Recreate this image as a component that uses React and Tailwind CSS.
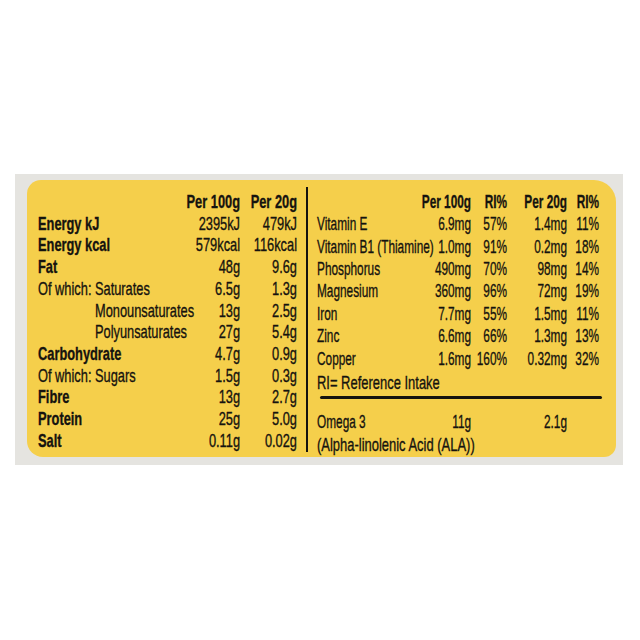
import React from 'react';

const leftRows = [
  { label: 'Energy kJ', bold: true, a: '2395kJ', b: '479kJ' },
  { label: 'Energy kcal', bold: true, a: '579kcal', b: '116kcal' },
  { label: 'Fat', bold: true, a: '48g', b: '9.6g' },
  { pre: 'Of which:', label: 'Saturates', a: '6.5g', b: '1.3g' },
  { indent: true, label: 'Monounsaturates', a: '13g', b: '2.5g' },
  { indent: true, label: 'Polyunsaturates', a: '27g', b: '5.4g' },
  { label: 'Carbohydrate', bold: true, a: '4.7g', b: '0.9g' },
  { pre: 'Of which:', label: 'Sugars', a: '1.5g', b: '0.3g' },
  { label: 'Fibre', bold: true, a: '13g', b: '2.7g' },
  { label: 'Protein', bold: true, a: '25g', b: '5.0g' },
  { label: 'Salt', bold: true, a: '0.11g', b: '0.02g' },
];

const rightRows = [
  ['Vitamin E', '6.9mg', '57%', '1.4mg', '11%'],
  ['Vitamin B1 (Thiamine)', '1.0mg', '91%', '0.2mg', '18%'],
  ['Phosphorus', '490mg', '70%', '98mg', '14%'],
  ['Magnesium', '360mg', '96%', '72mg', '19%'],
  ['Iron', '7.7mg', '55%', '1.5mg', '11%'],
  ['Zinc', '6.6mg', '66%', '1.3mg', '13%'],
  ['Copper', '1.6mg', '160%', '0.32mg', '32%'],
];

// text is set in Liberation Sans and squeezed horizontally to get the condensed look
const LeftRow = ({ row }) => (
  <div className="flex whitespace-nowrap">
    <div className={`flex-1 min-w-0 flex ${row.bold ? 'font-bold' : ''} ${row.indent ? 'pl-[84.4px]' : ''}`}>
      {row.pre && <span className="w-[84.4px] shrink-0">{row.pre}</span>}
      <span>{row.label}</span>
    </div>
    <div className="w-[90px] text-right">{row.a}</div>
    <div className="w-[84.4px] text-right">{row.b}</div>
  </div>
);

const RightRow = ({ cells, bold }) => (
  <div className={`flex whitespace-nowrap ${bold ? 'font-bold' : ''}`}>
    <div className="flex-1 min-w-0">{cells[0]}</div>
    <div className="w-[90px] text-right">{cells[1]}</div>
    <div className="w-[57.8px] text-right">{cells[2]}</div>
    <div className="w-[96.5px] text-right">{cells[3]}</div>
    <div className="w-[51.4px] text-right">{cells[4]}</div>
  </div>
);

export default function App() {
  return (
    <div className="w-[640px] h-[640px] bg-white pt-[174px] pl-[15px] font-['Liberation_Sans',Arial,sans-serif] text-[19px] text-[#15130f] [-webkit-text-stroke:0.35px_#15130f]">
      <div className="w-[608px] h-[291px] bg-[#e5e4e0] pt-[6px] pl-[12px]">
        <div className="w-[589px] h-[277px] bg-[#f5cf4b] rounded-tl-[14px] rounded-tr-[22px] rounded-br-[12px] rounded-bl-[16px] flex">

          {/* left: energy + macros */}
          <div className="w-[279px] shrink-0">
            <div className="w-[413.3px] origin-left scale-x-[0.675] pt-[11px] pl-[16.3px] pr-[13.3px] leading-[21.7px]">
              <div className="flex whitespace-nowrap font-bold">
                <div className="flex-1" />
                <div className="w-[90px] text-right">Per 100g</div>
                <div className="w-[84.4px] text-right">Per 20g</div>
              </div>
              {leftRows.map((r, i) => <LeftRow key={i} row={r} />)}
            </div>
          </div>

          <div className="w-[2px] shrink-0 mt-[7px] h-[265px] bg-[#15130f]" />

          {/* right: vitamins + minerals */}
          <div className="w-[308px] shrink-0">
            <div className="w-[495.2px] origin-left scale-x-[0.622] pt-[10.8px] pl-[14.5px] pr-[27.4px] leading-[22.4px]">
              <RightRow bold cells={['', 'Per 100g', 'RI%', 'Per 20g', 'RI%']} />
              {rightRows.map((c, i) => <RightRow key={i} cells={c} />)}
            </div>
            <div className="w-[460px] origin-left scale-x-[0.682] mt-[1.8px] pl-[13.2px] leading-[22.4px] whitespace-nowrap">
              RI= Reference Intake
            </div>
            <div className="ml-[12px] mr-[14px] mt-[2px] h-[3px] rounded-full bg-[#15130f]" />
            <div className="w-[495.2px] origin-left scale-x-[0.622] mt-[12px] pl-[14.5px] pr-[27.4px] leading-[22.4px]">
              <RightRow cells={['Omega 3', '11g', '', '2.1g', '']} />
            </div>
            <div className="w-[460px] origin-left scale-x-[0.682] pl-[13.2px] leading-[21px] whitespace-nowrap">
              (Alpha-linolenic Acid (ALA))
            </div>
          </div>
        </div>
      </div>
    </div>
  );
}
